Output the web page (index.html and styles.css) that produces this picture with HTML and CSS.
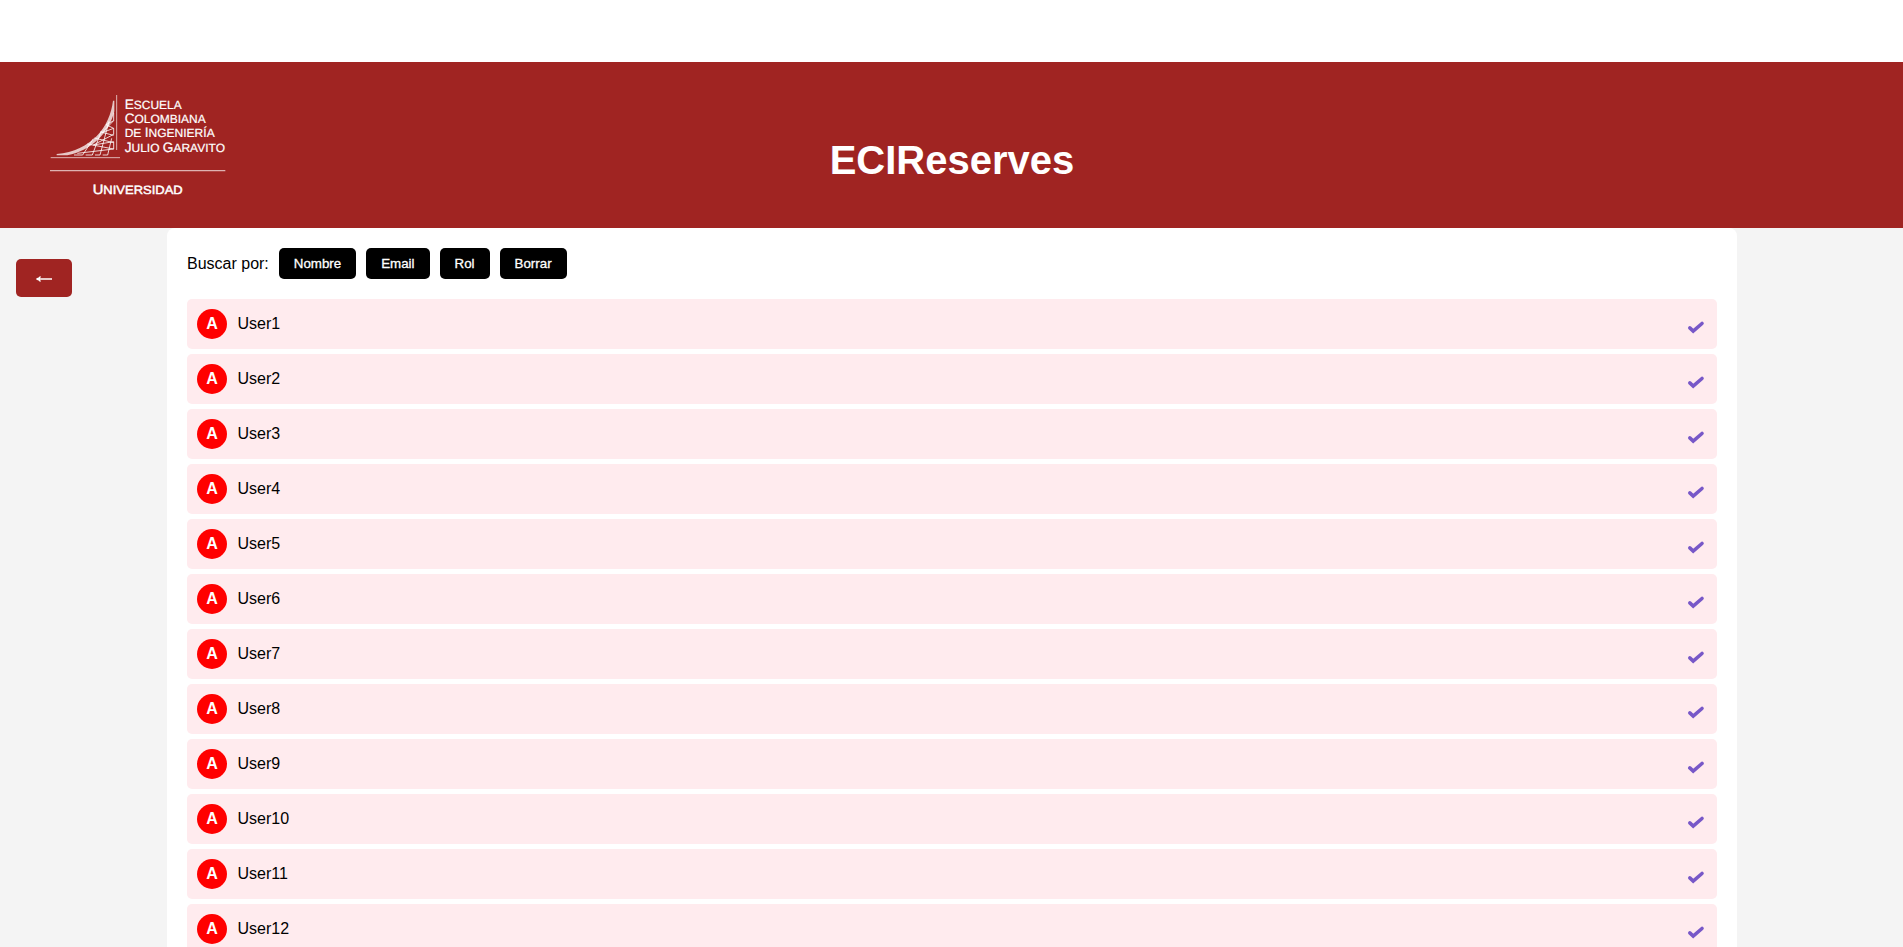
FILE: index.html
```html
<!DOCTYPE html>
<html lang="es">
<head>
<meta charset="utf-8">
<title>ECIReserves</title>
<link rel="stylesheet" href="styles.css">
</head>
<body>
<header class="header">
  <svg class="logo" viewBox="0 0 600 390" role="img" aria-label="Escuela Colombiana de Ingeniería Julio Garavito">
    <g class="logo-rules">
      <path d="M230 45V210M32 233H240"/>
      <path d="M30 272H556" stroke-width="3.5"/>
    </g>
    <path class="logo-curve" d="M219 62C210 140 155 212 50 222V226H82C155 212 208 158 223 94V62Z"/>
    <g class="logo-net">
      <path d="M221 98V122L186 158L221 145V163L160 195L221 185V207L112 220M221 122L198 134M198 134L221 145M182 156L221 166M163 174L221 188M142 192L221 207M102 225H128L160 176M137 225H157L184 153M165 225H180L207 124M188 225H203L215 175"/>
    </g>
    <g class="logo-text">
      <text x="254" y="87" textLength="171" lengthAdjust="spacingAndGlyphs"><tspan class="cap">E</tspan>SCUELA</text>
      <text x="254" y="130" textLength="243" lengthAdjust="spacingAndGlyphs"><tspan class="cap">C</tspan>OLOMBIANA</text>
      <text x="254" y="172" textLength="270" lengthAdjust="spacingAndGlyphs">DE <tspan class="cap">I</tspan>NGENIERÍA</text>
      <text x="254" y="215" textLength="301" lengthAdjust="spacingAndGlyphs"><tspan class="cap">J</tspan>ULIO <tspan class="cap">G</tspan>ARAVITO</text>
      <text class="strong" x="158" y="341" textLength="270" lengthAdjust="spacingAndGlyphs"><tspan class="cap">U</tspan>NIVERSIDAD</text>
    </g>
  </svg>
  <h1 class="title">ECIReserves</h1>
</header>
<div class="page">
  <button class="back" aria-label="Volver"><svg viewBox="0 0 16 6" width="16" height="6"><path d="M.5 3H16M4.5 .5Q3.5 2.5 .5 3Q3.5 3.5 4.5 5.5"/></svg></button>
  <main class="panel">
    <div class="filters">
      <span>Buscar por:</span>
      <button class="filter">Nombre</button>
      <button class="filter">Email</button>
      <button class="filter">Rol</button>
      <button class="filter">Borrar</button>
    </div>
    <ul class="users" id="users"></ul>
  </main>
</div>
<template id="row">
  <li class="user">
    <span class="avatar">A</span>
    <span class="name"></span>
    <svg class="check" viewBox="0 0 18 14"><path d="M2.8 7.9L6.2 11L15 3.5"/></svg>
  </li>
</template>
<script src="users.js"></script>
</body>
</html>
```
FILE: styles.css
```css
* {
  box-sizing: border-box;
}

body {
  margin: 0;
  height: 947px;
  overflow: hidden;
  padding-top: 62px;
  background: #fff;
  color: #000;
  font: 16px/18px "Liberation Sans", Arial, sans-serif;
}

.header {
  display: grid;
  grid-template-columns: 200px 1fr 200px;
  height: 166px;
  padding: 18px 40px 0;
  background: #a02422;
  color: #fff;
}

.logo {
  width: 200px;
  height: 130px;
}

.logo-rules,
.logo-net {
  fill: none;
  stroke: #fff;
}

.logo-rules {
  stroke-width: 3;
  stroke-opacity: .65;
}

.logo-net {
  stroke-width: 3;
  stroke-opacity: .8;
}

.logo-curve {
  fill: #fff;
  fill-opacity: .75;
}

.logo-text {
  fill: #fff;
  stroke: #fff;
  stroke-width: .6;
  font-size: 36px;
  text-rendering: geometricPrecision;
}

.cap {
  font-size: 41px;
}

.strong {
  stroke-width: 1.4;
}

.title {
  margin: 57px 0 0;
  padding-left: 1px;
  font-size: 40px;
  line-height: 46px;
  text-align: center;
}

.page {
  display: flex;
  align-items: flex-start;
  height: 719px;
  padding-left: 16px;
  background: #f4f4f4;
}

.back {
  display: flex;
  align-items: center;
  justify-content: center;
  width: 56px;
  height: 38px;
  margin: 31px 95px 0 0;
  padding: 1px 0 0;
  border: 0;
  border-radius: 5px;
  background: #a02422;
}

.back path {
  fill: none;
  stroke: #fff;
  stroke-width: 1.4;
}

.panel {
  width: 1570px;
  padding: 20px;
  border-radius: 8px;
  background: #fff;
}

.filters {
  display: flex;
  align-items: center;
  gap: 10px;
  margin-bottom: 20px;
}

.filter {
  height: 31px;
  padding: 0 15px;
  border: 0;
  border-radius: 5px;
  background: #000;
  color: #fff;
  font: 13.333px "Liberation Sans", Arial, sans-serif;
  -webkit-text-stroke: .3px #fff;
}

.users {
  display: flex;
  flex-direction: column;
  gap: 5px;
  margin: 0;
  padding: 0;
  list-style: none;
}

.user {
  display: flex;
  align-items: center;
  gap: 10px;
  height: 50px;
  padding: 0 12px 0 10px;
  border-radius: 5px;
  background: #ffebee;
}

.avatar {
  width: 30px;
  height: 30px;
  border-radius: 50%;
  background: #f00;
  color: #fff;
  font-weight: 700;
  line-height: 29px;
  text-align: center;
}

.name {
  padding-left: .5px;
}

.check {
  width: 18px;
  height: 14px;
  margin: 6px 0 0 auto;
}

.check path {
  fill: none;
  stroke: #7858c8;
  stroke-width: 3.6;
  stroke-linecap: round;
}
```
FILE: users.js
```js
const list = document.getElementById("users");
const row = document.getElementById("row");

for (let i = 1; i <= 12; i++) {
  const item = row.content.cloneNode(true);
  item.querySelector(".name").textContent = "User" + i;
  list.append(item);
}
```
